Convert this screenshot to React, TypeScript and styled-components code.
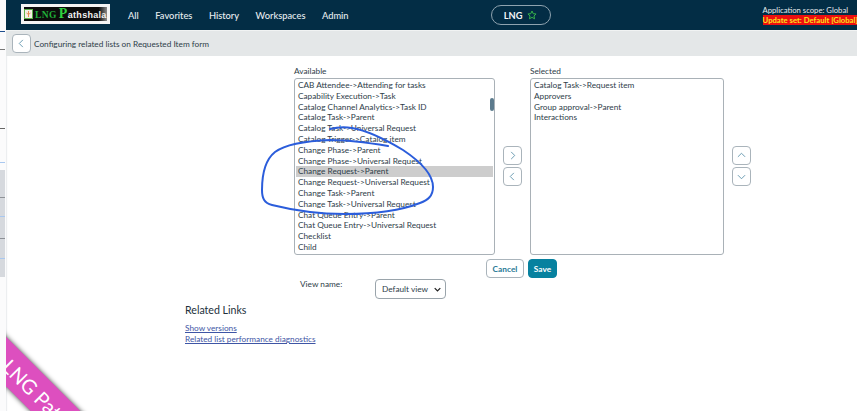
import React from "react";
import styled, { createGlobalStyle } from "styled-components";

const Global = createGlobalStyle`
  html, body { margin: 0; padding: 0; background: #fff; }
  body { font-family: Lato, "Open Sans", sans-serif; overflow: hidden; }
  #root { width: 857px; height: 411px; overflow: hidden; position: relative; }
`;

const Page = styled.div`
  display: flex;
  width: 857px;
  height: 411px;
  position: relative;
  overflow: hidden;
  background: #fff;
`;

const Strip = styled.div`
  width: 6px;
  flex: none;
  display: flex;
  flex-direction: column;
  background: #fbfbfc;
  box-shadow: 1px 0 1px #eceef0;
`;

const Tick = styled.div<{ $color: string; $top: number }>`
  height: 1px;
  width: 5px;
  margin-top: ${(p) => p.$top}px;
  background: ${(p) => p.$color};
`;

const StripBlock = styled.div`
  width: 5px;
  height: 107px;
  margin-top: 7px;
  background: #d6d9de;
  display: flex;
  flex-direction: column;
`;

const Main = styled.div`
  flex: 1;
  display: flex;
  flex-direction: column;
  min-width: 0;
`;

const Header = styled.header`
  height: 30px;
  flex: none;
  background: #032d45;
  display: flex;
  align-items: center;
  padding-left: 15px;
  color: #fff;
`;

const Logo = styled.div`
  width: 89px;
  height: 20px;
  flex: none;
  margin-bottom: 2px;
  box-sizing: border-box;
  background: linear-gradient(90deg, #0c0c0c 90%, #8a8a8a 100%);
  border: 3px solid #f4f4f4;
  display: flex;
  align-items: center;
  gap: 2px;
  overflow: hidden;
  white-space: nowrap;
`;

const LogoMark = styled.svg`
  width: 9px;
  height: 10px;
  flex: none;
`;

const LogoText = styled.span`
  font-family: "Liberation Serif", serif;
  font-weight: 700;
  font-size: 9.5px;
  line-height: 14px;
  color: #1fae3a;
  letter-spacing: 0.4px;
`;

const LogoBig = styled.span`
  font-size: 14px;
  color: #2fd23f;
  margin-left: 2px;
`;

const LogoTail = styled.span`
  color: #f2f2f2;
  font-family: "Liberation Sans", sans-serif;
  font-weight: 700;
  font-size: 9px;
  letter-spacing: 0.3px;
`;

const Nav = styled.nav`
  display: flex;
  gap: 16.5px;
  margin-left: 18px;
  font-size: 9.3px;
  font-weight: 500;
  color: #e9eef1;
  flex: none;
`;

const Pill = styled.div`
  width: 60px;
  height: 20px;
  flex: none;
  box-sizing: border-box;
  margin-left: 142px;
  border: 1px solid #8fa3af;
  border-radius: 10px;
  display: flex;
  align-items: center;
  justify-content: center;
  gap: 5px;
  font-size: 9.3px;
  font-weight: 700;
  color: #f3f6f7;
`;

const Scope = styled.div`
  margin-left: 212px;
  font-size: 7.7px;
  line-height: 10px;
  color: #e8ecee;
  white-space: nowrap;
  display: flex;
  flex-direction: column;
  align-items: flex-start;
  flex: none;
`;

const UpdateSet = styled.span`
  background: #ee0f0f;
  color: #f7e51e;
  font-weight: 700;
`;

const SubBar = styled.div`
  height: 26px;
  flex: none;
  background: #e4e7e8;
  display: flex;
  align-items: center;
  padding-left: 6px;
  gap: 3px;
  font-size: 8.25px;
  color: #2e3d49;
  border-top: 1px solid #f1f3f3;
  box-sizing: border-box;
`;

const IconBtn = styled.button<{ $size?: number }>`
  width: ${(p) => p.$size ?? 19}px;
  height: ${(p) => p.$size ?? 19}px;
  box-sizing: border-box;
  padding: 0;
  background: #fff;
  border: 1px solid #aab4bb;
  border-radius: 4px;
  display: flex;
  align-items: center;
  justify-content: center;
`;

const Chevron = styled.svg`
  width: 9px;
  height: 9px;
  fill: none;
  stroke: #5d93ac;
  stroke-width: 1;
`;

const Content = styled.main`
  flex: 1;
  display: flex;
  flex-direction: column;
  padding-top: 9px;
`;

const Slush = styled.div`
  display: flex;
  align-items: flex-start;
  margin-left: 288px;
`;

const Column = styled.div<{ $w: number }>`
  width: ${(p) => p.$w}px;
  display: flex;
  flex-direction: column;
`;

const Label = styled.label`
  font-size: 8.25px;
  line-height: 13px;
  color: #2e3d49;
`;

const ListBox = styled.div`
  height: 177px;
  box-sizing: border-box;
  border: 1px solid #a9b1b7;
  border-radius: 3px;
  padding: 1px 1px;
  position: relative;
  overflow: hidden;
`;

const Item = styled.div<{ $selected?: boolean }>`
  height: 10.8px;
  line-height: 10.8px;
  font-size: 8.25px;
  color: #2e3d49;
  padding-left: 2px;
  white-space: nowrap;
  background: ${(p) => (p.$selected ? "#cdcdcd" : "transparent")};
`;

const ScrollThumb = styled.div`
  position: absolute;
  right: 0;
  top: 19px;
  width: 4px;
  height: 13px;
  border-radius: 2px;
  background: #5c7b8d;
`;

const Stack = styled.div<{ $w: number }>`
  width: ${(p) => p.$w}px;
  margin-top: 81px;
  display: flex;
  flex-direction: column;
  align-items: center;
  gap: 2px;
`;

const Actions = styled.div`
  display: flex;
  gap: 4px;
  margin-left: 480px;
  margin-top: 4px;
`;

const BaseBtn = styled.button`
  height: 19px;
  box-sizing: border-box;
  border-radius: 4px;
  font-family: inherit;
  font-size: 8.3px;
  font-weight: 700;
  padding: 0;
`;

const Cancel = styled(BaseBtn)`
  width: 38px;
  background: #fff;
  border: 1px solid #aab4bb;
  color: #2a7a96;
`;

const Save = styled(BaseBtn)`
  width: 29px;
  background: #07819f;
  border: 1px solid #07819f;
  color: #fff;
`;

const ViewRow = styled.div`
  display: flex;
  align-items: flex-start;
  margin-left: 294px;
  margin-top: 1px;
`;

const ViewLabel = styled.span`
  width: 75px;
  font-size: 8.25px;
  line-height: 11px;
  color: #2e3d49;
`;

const ViewSelect = styled.div`
  width: 71px;
  height: 20px;
  box-sizing: border-box;
  border: 1px solid #9aa4ab;
  border-radius: 4px;
  display: flex;
  align-items: center;
  justify-content: space-between;
  padding: 0 4px 0 6px;
  font-size: 8.25px;
  color: #2e3d49;
`;

const Related = styled.section`
  margin-left: 179px;
  margin-top: 4px;
  display: flex;
  flex-direction: column;
  align-items: flex-start;
`;

const RelatedTitle = styled.h3`
  margin: 0 0 5px;
  font-size: 10.6px;
  line-height: 15px;
  font-weight: 400;
  color: #22303b;
`;

const RelatedLink = styled.a`
  font-size: 8.25px;
  line-height: 11px;
  color: #3e55a5;
  text-decoration: underline;
`;

const RibbonClip = styled.div`
  position: absolute;
  left: 6px;
  top: 300px;
  width: 120px;
  height: 111px;
  overflow: hidden;
  pointer-events: none;
`;

const Ribbon = styled.div`
  position: absolute;
  left: -56px;
  top: 78px;
  width: 180px;
  height: 35px;
  background: #dd4fbf;
  color: #fff;
  transform: rotate(45deg);
  box-shadow: 0 0 5px rgba(0, 0, 0, 0.75);
  display: flex;
  align-items: center;
  padding-left: 43px;
  box-sizing: border-box;
  font-size: 20px;
  white-space: nowrap;
`;

const Ink = styled.svg`
  position: absolute;
  left: 0;
  top: 0;
  width: 857px;
  height: 411px;
  pointer-events: none;
  fill: none;
  stroke: #2b5ddb;
  stroke-width: 2;
  stroke-linecap: round;
`;

const available = [
  "CAB Attendee->Attending for tasks",
  "Capability Execution->Task",
  "Catalog Channel Analytics->Task ID",
  "Catalog Task->Parent",
  "Catalog Task->Universal Request",
  "Catalog Trigger->Catalog item",
  "Change Phase->Parent",
  "Change Phase->Universal Request",
  "Change Request->Parent",
  "Change Request->Universal Request",
  "Change Task->Parent",
  "Change Task->Universal Request",
  "Chat Queue Entry->Parent",
  "Chat Queue Entry->Universal Request",
  "Checklist",
  "Child",
];

const selected = [
  "Catalog Task->Request item",
  "Approvers",
  "Group approval->Parent",
  "Interactions",
];

const Chev = ({ d }: { d: string }) => (
  <Chevron viewBox="0 0 10 10">
    <path d={d} />
  </Chevron>
);

const LEFT = "M6.5 1 L2.5 5 L6.5 9";
const RIGHT = "M3.5 1 L7.5 5 L3.5 9";
const UP = "M1 6.5 L5 2.5 L9 6.5";
const DOWN = "M1 3.5 L5 7.5 L9 3.5";

export default function App() {
  return (
    <Page>
      <Global />
      <Strip>
        <Tick $color="#1f4f8f" $top={31} />
        <Tick $color="#777" $top={17} />
        <Tick $color="#666" $top={78} />
        <Tick $color="#a9c8f0" $top={33} />
        <StripBlock>
          <Tick $color="#8f9297" $top={27} />
          <Tick $color="#a9c8f0" $top={18} />
          <Tick $color="#8d9096" $top={21} />
          <Tick $color="#a9c8f0" $top={19} />
        </StripBlock>
      </Strip>
      <Main>
        <Header>
          <Logo>
            <LogoMark viewBox="0 0 9 10">
              <rect x="0.5" y="0.5" width="8" height="9" fill="#f3efe6" stroke="#5fb04a" />
              <path d="M4.5 2v6M2.5 4l2 1.5 2-1.5" stroke="#e98a54" fill="none" strokeWidth="1" />
            </LogoMark>
            <LogoText>
              LNG<LogoBig>P</LogoBig>
              <LogoTail>athshala</LogoTail>
            </LogoText>
          </Logo>
          <Nav>
            <span>All</span>
            <span>Favorites</span>
            <span>History</span>
            <span>Workspaces</span>
            <span>Admin</span>
          </Nav>
          <Pill>
            LNG
            <svg width="10" height="10" viewBox="0 0 24 24" fill="none" stroke="#37b34a" strokeWidth="2.4">
              <path d="M12 2.5l2.9 6.3 6.9.8-5.1 4.7 1.4 6.8-6.1-3.4-6.1 3.4 1.4-6.8-5.1-4.7 6.9-.8z" />
            </svg>
          </Pill>
          <Scope>
            <span>Application scope: Global</span>
            <UpdateSet>Update set: Default [Global]</UpdateSet>
          </Scope>
        </Header>
        <SubBar>
          <IconBtn>
            <Chev d={LEFT} />
          </IconBtn>
          Configuring related lists on Requested Item form
        </SubBar>
        <Content>
          <Slush>
            <Column $w={201}>
              <Label>Available</Label>
              <ListBox>
                {available.map((t) => (
                  <Item key={t} $selected={t === "Change Request->Parent"}>
                    {t}
                  </Item>
                ))}
                <ScrollThumb />
              </ListBox>
            </Column>
            <Stack $w={35}>
              <IconBtn>
                <Chev d={RIGHT} />
              </IconBtn>
              <IconBtn>
                <Chev d={LEFT} />
              </IconBtn>
            </Stack>
            <Column $w={194}>
              <Label>Selected</Label>
              <ListBox>
                {selected.map((t) => (
                  <Item key={t}>{t}</Item>
                ))}
              </ListBox>
            </Column>
            <Stack $w={35}>
              <IconBtn>
                <Chev d={UP} />
              </IconBtn>
              <IconBtn>
                <Chev d={DOWN} />
              </IconBtn>
            </Stack>
          </Slush>
          <Actions>
            <Cancel>Cancel</Cancel>
            <Save>Save</Save>
          </Actions>
          <ViewRow>
            <ViewLabel>View name:</ViewLabel>
            <ViewSelect>
              Default view
              <svg width="7" height="7" viewBox="0 0 10 10" fill="none" stroke="#222" strokeWidth="1.8">
                <path d="M1 3 L5 7 L9 3" />
              </svg>
            </ViewSelect>
          </ViewRow>
          <Related>
            <RelatedTitle>Related Links</RelatedTitle>
            <RelatedLink href="#">Show versions</RelatedLink>
            <RelatedLink href="#">Related list performance diagnostics</RelatedLink>
          </Related>
        </Content>
      </Main>
      <RibbonClip>
        <Ribbon>LNG Pathshala</Ribbon>
      </RibbonClip>
      <Ink viewBox="0 0 857 411">
        <path d="M330 129 C338 127 345 127 352 128 C370 131 388 141 403 150 C418 160 433 174 433 187 C433 196 428 200 420 203 C402 210 375 214 345 214 C320 214 292 210 272 205 C264 203 262 198 262 190 C262 176 265 160 275 152 C286 144 305 141 330 140 C350 140 370 143 388 146" />
      </Ink>
    </Page>
  );
}
